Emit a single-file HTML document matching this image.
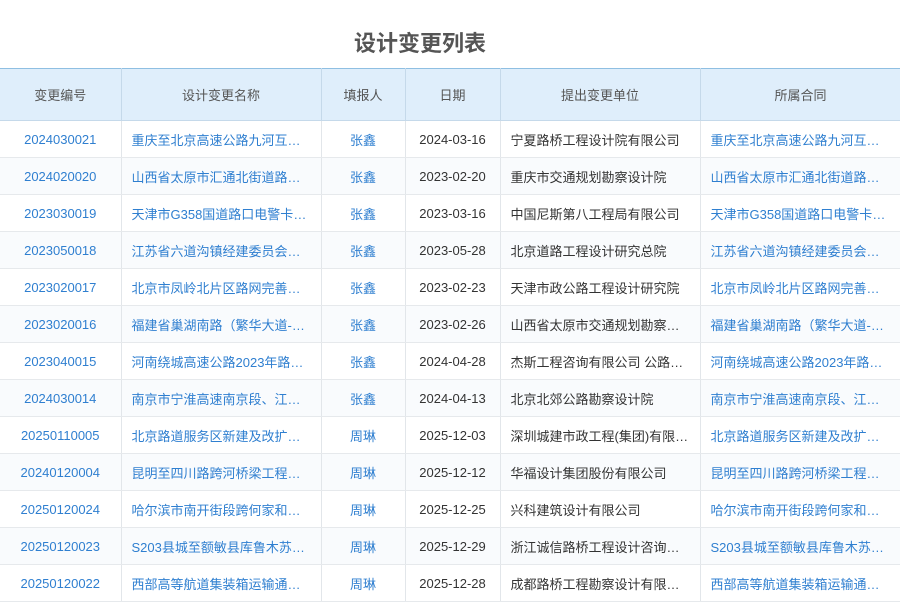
<!DOCTYPE html>
<html><head><meta charset="utf-8"><style>
body{margin:0;width:900px;height:600px;overflow:hidden;background:#fff;font-family:"Liberation Sans","Noto Sans CJK SC",sans-serif;font-size:13px}
h1{margin:0;position:absolute;top:30px;left:0;width:840px;text-align:center;font-size:22px;font-weight:bold;color:#555;line-height:28px}
table{position:absolute;top:68px;left:0;border-collapse:collapse;table-layout:fixed;width:901px}
th{background:#dfeefb;color:#555;font-weight:normal;height:51px;border-right:1px solid #c5d9ea;border-top:1px solid #8fbfe2;border-bottom:1px solid #c5d9ea;padding:0}
td{height:36px;border-right:1px solid #e2e6ea;border-bottom:1px solid #e6e9ec;padding:0 10px;white-space:nowrap;overflow:hidden;text-overflow:ellipsis;color:#333}
tr:nth-child(odd) td{background:#f9fbfd}
.c{text-align:center}.l{color:#2f7fd0}
</style></head><body>
<h1>设计变更列表</h1>
<table>
<colgroup><col style="width:121px"><col style="width:200px"><col style="width:84px"><col style="width:95px"><col style="width:200px"><col style="width:201px"></colgroup>
<tr><th>变更编号</th><th>设计变更名称</th><th>填报人</th><th>日期</th><th>提出变更单位</th><th>所属合同</th></tr>
<tr><td class="c l">2024030021</td><td class="l">重庆至北京高速公路九河互通工程</td><td class="c l">张鑫</td><td class="c">2024-03-16</td><td>宁夏路桥工程设计院有限公司</td><td class="l">重庆至北京高速公路九河互通工程</td></tr>
<tr><td class="c l">2024020020</td><td class="l">山西省太原市汇通北街道路工程</td><td class="c l">张鑫</td><td class="c">2023-02-20</td><td>重庆市交通规划勘察设计院</td><td class="l">山西省太原市汇通北街道路工程</td></tr>
<tr><td class="c l">2023030019</td><td class="l">天津市G358国道路口电警卡口工程</td><td class="c l">张鑫</td><td class="c">2023-03-16</td><td>中国尼斯第八工程局有限公司</td><td class="l">天津市G358国道路口电警卡口工程</td></tr>
<tr><td class="c l">2023050018</td><td class="l">江苏省六道沟镇经建委员会工程</td><td class="c l">张鑫</td><td class="c">2023-05-28</td><td>北京道路工程设计研究总院</td><td class="l">江苏省六道沟镇经建委员会工程</td></tr>
<tr><td class="c l">2023020017</td><td class="l">北京市凤岭北片区路网完善工程</td><td class="c l">张鑫</td><td class="c">2023-02-23</td><td>天津市政公路工程设计研究院</td><td class="l">北京市凤岭北片区路网完善工程</td></tr>
<tr><td class="c l">2023020016</td><td class="l">福建省巢湖南路（繁华大道-工程</td><td class="c l">张鑫</td><td class="c">2023-02-26</td><td>山西省太原市交通规划勘察设计院</td><td class="l">福建省巢湖南路（繁华大道-工程</td></tr>
<tr><td class="c l">2023040015</td><td class="l">河南绕城高速公路2023年路面工程</td><td class="c l">张鑫</td><td class="c">2024-04-28</td><td>杰斯工程咨询有限公司 公路分院</td><td class="l">河南绕城高速公路2023年路面工程</td></tr>
<tr><td class="c l">2024030014</td><td class="l">南京市宁淮高速南京段、江苏工程</td><td class="c l">张鑫</td><td class="c">2024-04-13</td><td>北京北郊公路勘察设计院</td><td class="l">南京市宁淮高速南京段、江苏工程</td></tr>
<tr><td class="c l">20250110005</td><td class="l">北京路道服务区新建及改扩建工程</td><td class="c l">周琳</td><td class="c">2025-12-03</td><td>深圳城建市政工程(集团)有限公司</td><td class="l">北京路道服务区新建及改扩建工程</td></tr>
<tr><td class="c l">20240120004</td><td class="l">昆明至四川路跨河桥梁工程项目</td><td class="c l">周琳</td><td class="c">2025-12-12</td><td>华福设计集团股份有限公司</td><td class="l">昆明至四川路跨河桥梁工程项目</td></tr>
<tr><td class="c l">20250120024</td><td class="l">哈尔滨市南开街段跨何家和工程</td><td class="c l">周琳</td><td class="c">2025-12-25</td><td>兴科建筑设计有限公司</td><td class="l">哈尔滨市南开街段跨何家和工程</td></tr>
<tr><td class="c l">20250120023</td><td class="l">S203县城至额敏县库鲁木苏工程</td><td class="c l">周琳</td><td class="c">2025-12-29</td><td>浙江诚信路桥工程设计咨询有限公司</td><td class="l">S203县城至额敏县库鲁木苏工程</td></tr>
<tr><td class="c l">20250120022</td><td class="l">西部高等航道集装箱运输通道工程</td><td class="c l">周琳</td><td class="c">2025-12-28</td><td>成都路桥工程勘察设计有限公司</td><td class="l">西部高等航道集装箱运输通道工程</td></tr>
</table>
</body></html>
